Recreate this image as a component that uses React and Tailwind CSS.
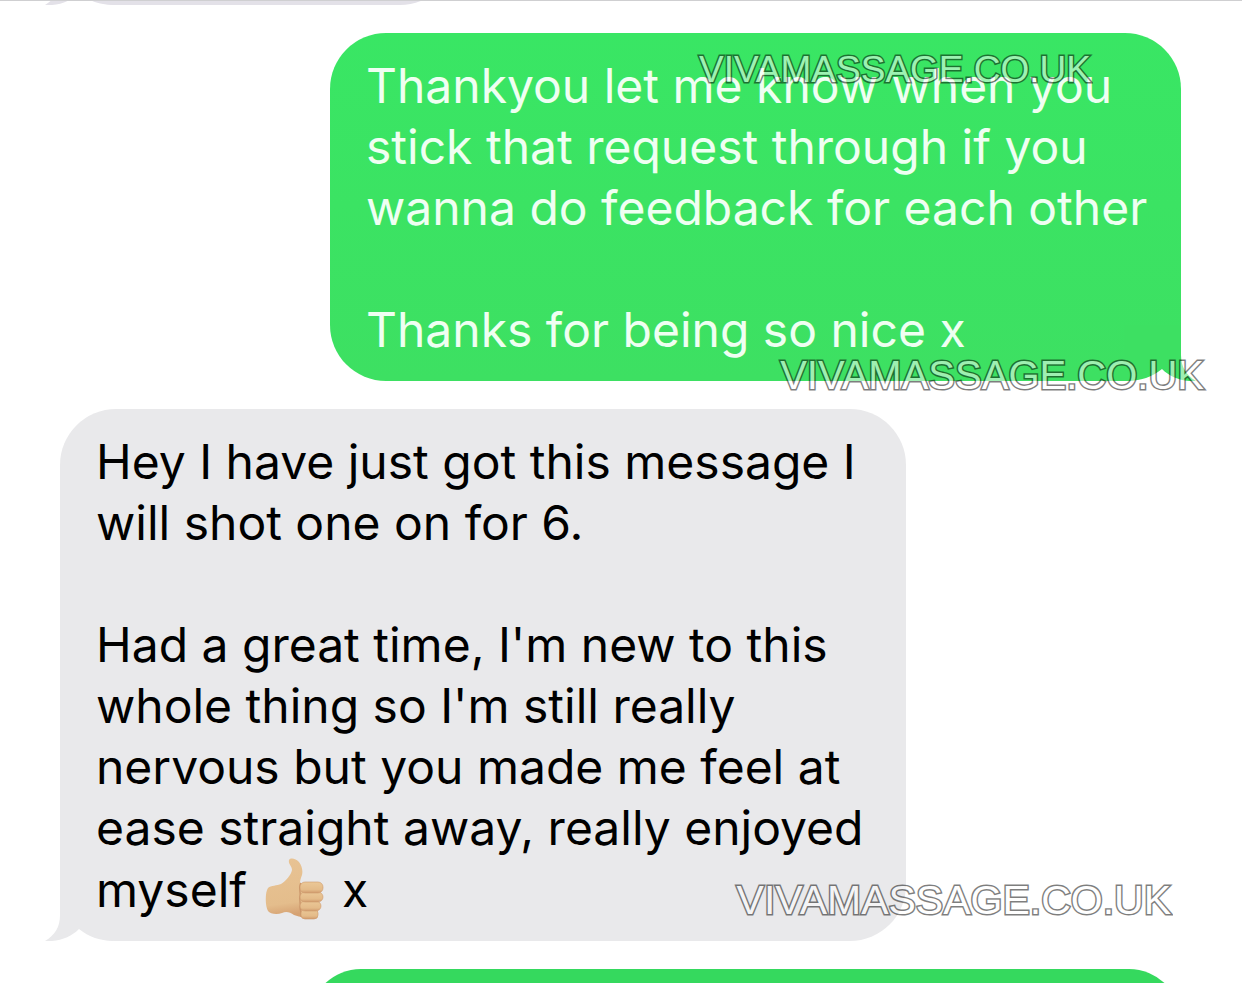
const sent = [
  "Thankyou let me know when you",
  "stick that request through if you",
  "wanna do feedback for each other",
  "",
  "Thanks for being so nice x",
];

const received = [
  "Hey I have just got this message I",
  "will shot one on for 6.",
  "",
  "Had a great time, I'm new to this",
  "whole thing so I'm still really",
  "nervous but you made me feel at",
  "ease straight away, really enjoyed",
];

function Tail({ className }) {
  return (
    <svg
      viewBox="0 0 72 56"
      className={`absolute bottom-0 h-[56px] w-[72px] ${className}`}
      aria-hidden="true"
    >
      <path
        d="M15 0V30C15 42 10 50 0 56C14 57 26 52 34 44C44 52 54 56 72 56V0Z"
        fill="currentColor"
      />
    </svg>
  );
}

function ThumbsUp() {
  return (
    <svg
      viewBox="0 0 60 62"
      className="mx-1 inline-block h-[62px] w-[60px] align-[-13px]"
      role="img"
      aria-label="thumbs up"
    >
      <defs>
        <linearGradient id="skin" x1="0" y1="0" x2="0.1" y2="1">
          <stop offset="0" stopColor="#e8c394" />
          <stop offset="0.8" stopColor="#e4bd8c" />
          <stop offset="1" stopColor="#d6a273" />
        </linearGradient>
        <linearGradient id="finger" x1="0" y1="0" x2="0" y2="1">
          <stop offset="0" stopColor="#ebc897" />
          <stop offset="0.7" stopColor="#e4bb89" />
          <stop offset="1" stopColor="#d09a6c" />
        </linearGradient>
      </defs>
      <path
        d="M24 2C26 -1 31 1 34 4C37 8 38 13 37 17C36 20 35 22 35 25C40 26 43 30 44 35V57C42 61 34 59 29 57C25 54 21 53 17 55C12 57 5 56 3 53C0 48 0 34 3 30C6 27 12 28 16 26C21 23 26 17 27 12C27 8 23 6 24 2Z"
        fill="url(#skin)"
      />
      <path
        d="M36 25C33 29 36 34 35 38C34 42 36 46 35 49C35 53 37 55 36 59"
        fill="none"
        stroke="#cb966a"
        strokeWidth="1.4"
      />
      <g fill="url(#finger)" stroke="#cf9a6d" strokeWidth="0.6">
        <rect x="36" y="51" width="17" height="10" rx="4" />
        <rect x="35" y="43" width="21" height="10" rx="5" />
        <rect x="35" y="34" width="23" height="10" rx="5" />
        <rect x="35" y="24" width="23" height="11" rx="5" />
      </g>
    </svg>
  );
}

// white letters with a black rim, half transparent as a whole
function Watermark({ className }) {
  return (
    <span
      className={`absolute whitespace-nowrap font-['Liberation_Sans',Arial,sans-serif] leading-none text-white opacity-50 [-webkit-text-stroke:3px_black] [paint-order:stroke_fill] ${className}`}
    >
      VIVAMASSAGE.CO.UK
    </span>
  );
}

function Line({ children }) {
  return <p className="min-h-[61px] whitespace-nowrap">{children}</p>;
}

export default function App() {
  return (
    <main className="flex h-screen flex-col gap-7 overflow-hidden bg-white font-[Inter,sans-serif] text-[48px] leading-[61px]">
      <div className="flex h-[5px] shrink-0 items-end overflow-hidden border-t border-[#cfcfd1] pl-[60px]">
        <div className="relative h-[120px] w-[396px] shrink-0 rounded-[56px] bg-[#e3e1e8] text-[#e3e1e8]">
          <Tail className="-left-[15px]" />
        </div>
      </div>

      <div className="flex shrink-0 flex-col gap-7 pl-[60px] pr-[61px]">
        <section className="relative w-[851px] max-w-full self-end rounded-[56px] bg-linear-to-b from-[#39e664] to-[#3de062] pb-[21px] pl-[36px] pt-[22px] text-[#3de062]">
          <Tail className="-right-[15px] -scale-x-100" />
          <div className="text-[#effff2]">
            {sent.map((text, i) => (
              <Line key={i}>{text}</Line>
            ))}
          </div>
          <Watermark className="right-[90px] top-[18px] text-[37px]" />
          <Watermark className="-bottom-[14px] -right-[23px] text-[40px]" />
        </section>

        <section className="relative w-[846px] max-w-full self-start rounded-[56px] bg-[#e9e9eb] pb-[22px] pl-[36px] pt-[22px] text-[#e9e9eb]">
          <Tail className="-left-[15px]" />
          <div className="relative text-black">
            {received.map((text, i) => (
              <Line key={i}>{text}</Line>
            ))}
            <p className="h-[61px] whitespace-nowrap">
              myself <ThumbsUp /> x
            </p>
          </div>
          <Watermark className="-right-[265px] bottom-[20px] text-[41px]" />
        </section>

        <section className="h-[160px] w-[872px] max-w-full self-end rounded-[52px] bg-[#35d95e]" />
      </div>
    </main>
  );
}
